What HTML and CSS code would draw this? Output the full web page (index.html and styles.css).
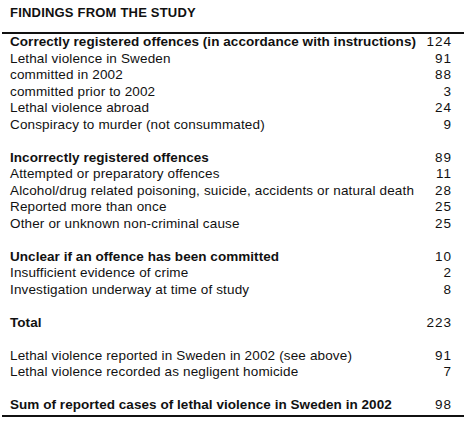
FILE: index.html
```html
<!DOCTYPE html>
<html lang="en">
<head>
    <meta charset="UTF-8">
    <title>Findings from the study</title>
    <link rel="stylesheet" href="styles.css">
</head>
<body>
    <div class="findings">
        <h2 class="findings-title">FINDINGS FROM THE STUDY</h2>

        <div class="findings-table">
            <!-- Correctly registered -->
            <div class="group">
                <div class="row head"><span>Correctly registered offences (in accordance with instructions)</span><span class="num">124</span></div>
                <div class="row"><span>Lethal violence in Sweden</span><span class="num">91</span></div>
                <div class="row"><span>committed in 2002</span><span class="num">88</span></div>
                <div class="row"><span>committed prior to 2002</span><span class="num">3</span></div>
                <div class="row"><span>Lethal violence abroad</span><span class="num">24</span></div>
                <div class="row"><span>Conspiracy to murder (not consummated)</span><span class="num">9</span></div>
            </div>

            <!-- Incorrectly registered -->
            <div class="group">
                <div class="row head"><span>Incorrectly registered offences</span><span class="num">89</span></div>
                <div class="row"><span>Attempted or preparatory offences</span><span class="num">11</span></div>
                <div class="row"><span>Alcohol/drug related poisoning, suicide, accidents or natural death</span><span class="num">28</span></div>
                <div class="row"><span>Reported more than once</span><span class="num">25</span></div>
                <div class="row"><span>Other or unknown non-criminal cause</span><span class="num">25</span></div>
            </div>

            <!-- Unclear -->
            <div class="group">
                <div class="row head"><span>Unclear if an offence has been committed</span><span class="num">10</span></div>
                <div class="row"><span>Insufficient evidence of crime</span><span class="num">2</span></div>
                <div class="row"><span>Investigation underway at time of study</span><span class="num">8</span></div>
            </div>

            <div class="group">
                <div class="row head"><span>Total</span><span class="num">223</span></div>
            </div>

            <div class="group">
                <div class="row"><span>Lethal violence reported in Sweden in 2002 (see above)</span><span class="num">91</span></div>
                <div class="row"><span>Lethal violence recorded as negligent homicide</span><span class="num">7</span></div>
            </div>

            <div class="group">
                <div class="row head"><span>Sum of reported cases of lethal violence in Sweden in 2002</span><span class="num">98</span></div>
            </div>
        </div>
    </div>
</body>
</html>
```

FILE: styles.css
```css
body {
    margin: 0;
    background: #ffffff;
    color: #111111;
    font-family: 'Liberation Sans', Arial, sans-serif;
}
.findings {
    width: 462px;
    padding: 5px 0 0 2px;
}
.findings-title {
    margin: 0;
    padding-left: 8px;
    font-size: 13px;
    font-weight: bold;
    line-height: 16px;
    letter-spacing: 0.2px;
}
.findings-table {
    margin-top: 11px;
    border-top: 2px solid #111111;
    border-bottom: 2px solid #111111;
    padding: 0 13px 1px 8px;
}
.group {
    margin-top: 16.5px;
}
.group:first-child {
    margin-top: 0;
}
.row {
    display: flex;
    justify-content: space-between;
    font-size: 13.5px;
    line-height: 16.5px;
    letter-spacing: 0.15px;
}
.row.head {
    font-weight: bold;
    letter-spacing: 0.05px;
}
.num {
    font-weight: normal;
    letter-spacing: 1px;
    margin-right: -1px;
}
```
